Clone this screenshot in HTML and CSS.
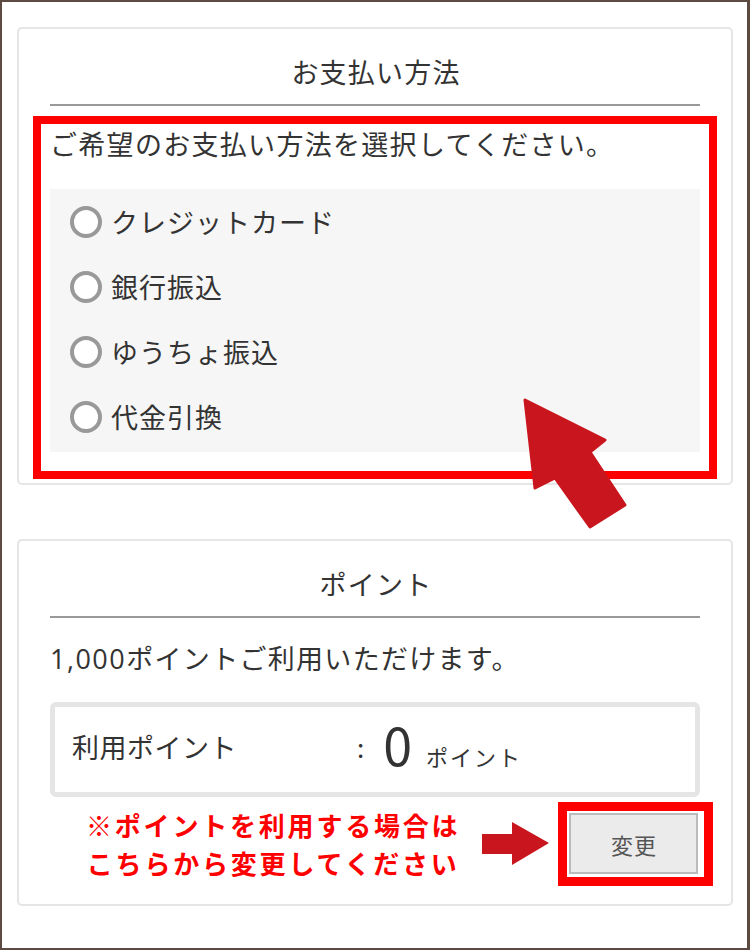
FILE: index.html
```html
<!DOCTYPE html>
<html lang="ja">
<head>
<meta charset="utf-8">
<title>お支払い方法</title>
<link rel="stylesheet" href="styles.css">
</head>
<body>
<div class="page">
  <section class="card">
    <h2 class="card-title">お支払い方法</h2>
    <div class="rule"></div>
    <div class="highlight">
      <p class="lead">ご希望のお支払い方法を選択してください。</p>
      <ul class="options">
        <li class="option"><span class="radio"></span><span>クレジットカード</span></li>
        <li class="option"><span class="radio"></span><span>銀行振込</span></li>
        <li class="option"><span class="radio"></span><span>ゆうちょ振込</span></li>
        <li class="option"><span class="radio"></span><span>代金引換</span></li>
      </ul>
    </div>
  </section>

  <section class="card card-points">
    <h2 class="card-title">ポイント</h2>
    <div class="rule"></div>
    <p class="lead lead-points"><span class="digits">1,000</span>ポイントご利用いただけます。</p>
    <div class="pointbox">
      <span class="point-label">利用ポイント</span>
      <span class="point-value">
        <span class="colon">:</span>
        <span class="num">0</span>
        <span class="unit">ポイント</span>
      </span>
    </div>
    <div class="note-row">
      <p class="note">※ポイントを利用する場合は<br>こちらから変更してください</p>
      <svg class="arrow-right" width="67" height="44" viewBox="0 0 67 44">
        <polygon points="0,12 30,12 30,0 67,21 30,43 30,32 0,32" fill="#c9161e"/>
      </svg>
      <div class="btn-wrap"><button class="btn" type="button">変更</button></div>
    </div>
  </section>

  <svg class="arrow-big" width="110" height="136" viewBox="521 396 110 136">
    <polygon points="525,400 605,440 590,452 625,505 590,527 555,478 535,488" fill="#c9161e" stroke="#c9161e" stroke-width="3" stroke-linejoin="round"/>
  </svg>
</div>
</body>
</html>
```

FILE: styles.css
```css
* {
  box-sizing: border-box;
}

html, body {
  margin: 0;
  padding: 0;
  background: #fff;
}

body {
  font-family: "Noto Sans CJK JP", "Noto Sans", sans-serif;
  color: #333;
}

.page {
  position: relative;
  width: 750px;
  height: 950px;
  border: 2px solid #5d4b41;
  border-right-width: 3px;
  padding: 25px 14px 0 15px;
  overflow: hidden;
}

.card {
  border: 2px solid #e5e5e5;
  border-radius: 5px;
  padding: 23px 31px 4px;
  background: #fff;
}

.card + .card {
  margin-top: 54px;
}

.card-points {
  padding-bottom: 18px;
}

.card-title {
  margin: 0;
  font-size: 27px;
  font-weight: 400;
  line-height: 40px;
  letter-spacing: 1.2px;
  text-align: center;
  padding-left: 2px;
}

.rule {
  height: 2px;
  background: #999;
  margin-top: 12px;
}

.highlight {
  border: 8px solid #ff0000;
  margin: 10px -17px 0;
  padding: 0 9px 19px;
}

.lead {
  margin: 0;
  font-size: 27px;
  line-height: 40px;
  letter-spacing: 1.3px;
}

.digits {
  font-family: "Open Sans", "Noto Sans", sans-serif;
  letter-spacing: 1.5px;
}

.options {
  list-style: none;
  margin: 25px 0 0;
  padding: 0 20px 3px;
  background: #f6f6f6;
}

.option {
  height: 65px;
  display: flex;
  align-items: center;
  gap: 9px;
  font-size: 27px;
  letter-spacing: 1px;
}

.radio {
  width: 32px;
  height: 32px;
  border: 4px solid #999;
  border-radius: 50%;
  background: #fff;
  flex: none;
}

.lead-points {
  margin-top: 20px;
}

.pointbox {
  margin-top: 23px;
  height: 95px;
  border: 5px solid #e5e5e5;
  border-radius: 6px;
  display: flex;
  align-items: center;
  padding-left: 17px;
}

.point-label {
  width: 285px;
  font-size: 27px;
  letter-spacing: 0.5px;
  line-height: 40px;
  margin-top: -6px;
}

.point-value {
  display: flex;
  align-items: baseline;
  margin-top: -12px;
}

.colon {
  font-size: 26px;
  position: relative;
  top: -8px;
}

.num {
  font-size: 52px;
  line-height: 60px;
  margin-left: 19px;
}

.unit {
  font-size: 22px;
  letter-spacing: 2px;
  margin-left: 14px;
}

.note-row {
  display: flex;
  align-items: center;
  margin-top: 5px;
  padding-left: 36px;
}

.note {
  margin: 0;
  color: #f00;
  font-weight: 700;
  font-size: 26px;
  line-height: 38px;
  letter-spacing: 2.8px;
  text-align: center;
  white-space: nowrap;
}

.arrow-right {
  display: block;
  margin-left: 22px;
  flex: none;
}

.btn-wrap {
  margin-left: 9px;
  border: 9px solid #f00;
  padding: 2px 6px 3px 2px;
}

.btn {
  display: block;
  width: 129px;
  height: 61px;
  border: 2px solid #bbb;
  background: #ebebeb;
  font-family: "Noto Sans CJK JP", sans-serif;
  font-size: 22px;
  color: #555;
  letter-spacing: 1px;
  padding: 0;
}

.arrow-big {
  position: absolute;
  left: 519px;
  top: 394px;
  pointer-events: none;
}
```
